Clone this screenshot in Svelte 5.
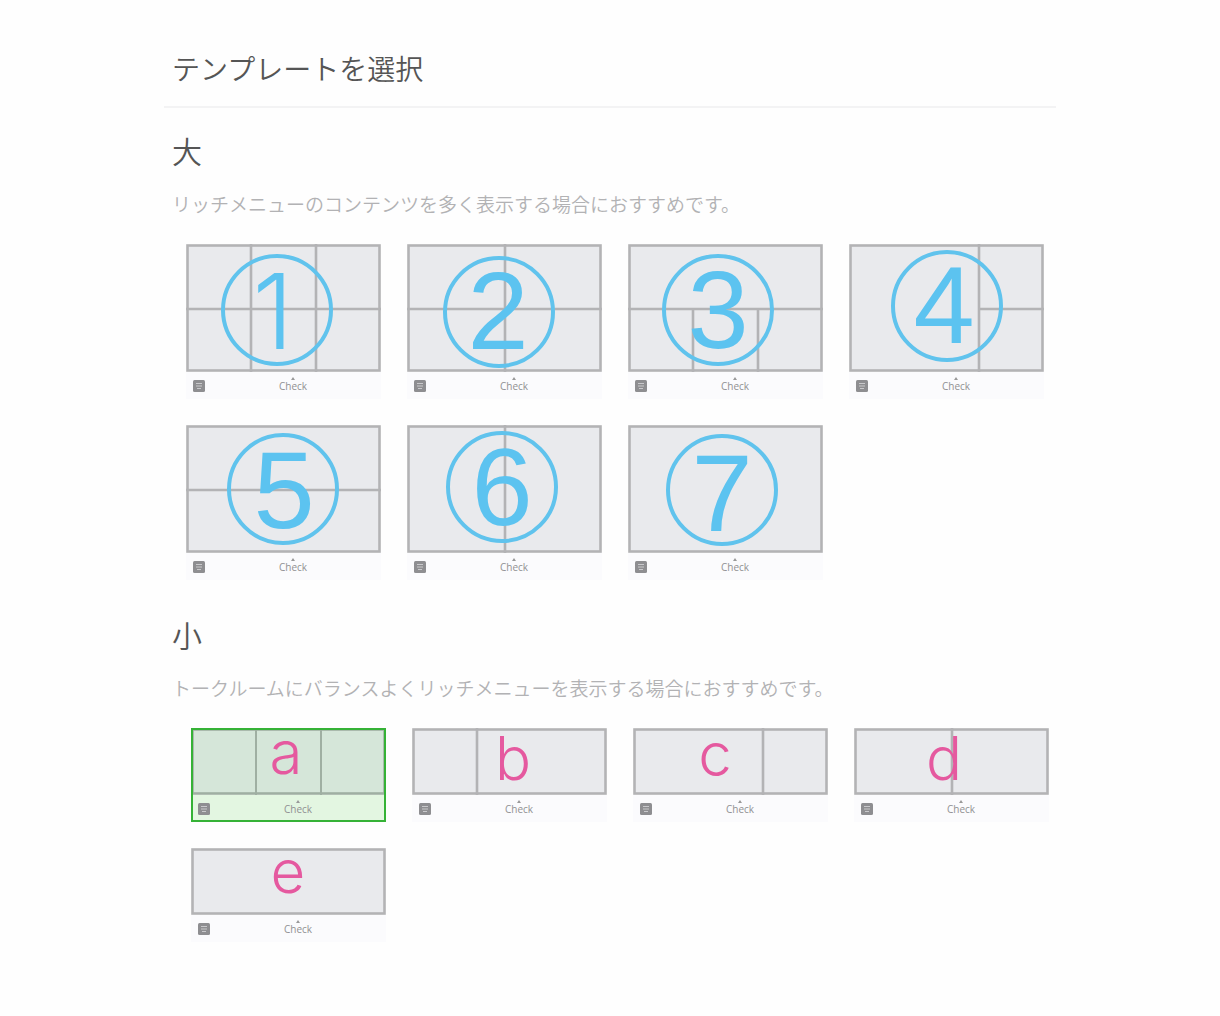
<script lang="ts">
	type Mark = { text: string; x: number; y: number; cx?: number; cy?: number };
	type Template = { id: string; lines: string; mark: Mark };

	const large: Template[] = [
		{ id: '1', lines: 'M65 0V128M130 0V128M0 65H195', mark: { text: '1', x: 87, y: 105, cx: 91, cy: 66 } },
		{ id: '2', lines: 'M98 0V128M0 65H195', mark: { text: '2', x: 91, y: 105, cx: 92, cy: 68 } },
		{ id: '3', lines: 'M0 65H195M65 65V128M130 65V128', mark: { text: '3', x: 90, y: 104, cx: 90, cy: 66 } },
		{ id: '4', lines: 'M130 0V128M130 65H195', mark: { text: '4', x: 95, y: 99, cx: 98, cy: 62 } },
		{ id: '5', lines: 'M0 65H195', mark: { text: '5', x: 98, y: 103, cx: 97, cy: 64 } },
		{ id: '6', lines: 'M98 0V128', mark: { text: '6', x: 95, y: 100, cx: 95, cy: 62 } },
		{ id: '7', lines: '', mark: { text: '7', x: 94, y: 106, cx: 94, cy: 65 } }
	];

	const small: Template[] = [
		{ id: 'a', lines: 'M65 0V67M130 0V67', mark: { text: 'a', x: 95, y: 46 } },
		{ id: 'b', lines: 'M65 0V67', mark: { text: 'b', x: 101, y: 52 } },
		{ id: 'c', lines: 'M130 0V67', mark: { text: 'c', x: 82, y: 48 } },
		{ id: 'd', lines: 'M98 0V67', mark: { text: 'd', x: 90, y: 52 } },
		{ id: 'e', lines: '', mark: { text: 'e', x: 97, y: 45 } }
	];

	let selected = $state('a');
</script>

{#snippet card(item: Template, height: number)}
	<button
		type="button"
		class="card"
		class:selected={selected === item.id}
		aria-pressed={selected === item.id}
		onclick={() => (selected = item.id)}
	>
		<svg class="preview" viewBox="0 0 195 {height}">
			<rect class="frame" x="1.5" y="1.5" width="192" height={height - 3} />
			<path class="line" d={item.lines} />
			{#if item.mark.cx}
				<circle class="ring" cx={item.mark.cx} cy={item.mark.cy} r="54" />
				<text class="number" class:one={item.id === '1'} x={item.mark.x} y={item.mark.y}>{item.mark.text}</text>
			{:else}
				<text class="letter" x={item.mark.x} y={item.mark.y}>{item.mark.text}</text>
			{/if}
		</svg>
		<span class="bar">
			<span class="keyboard">
				<svg width="12" height="12" viewBox="0 0 12 12">
					<rect width="12" height="12" rx="1.5" fill="#8e8e91" />
					<path d="M3 3.5H9M3 6H9M4 8.5H8" stroke="#c9c9cc" stroke-width="1.2" />
				</svg>
			</span>
			<span class="label">
				<svg width="4" height="3" viewBox="0 0 4 3"><path d="M0 3L2 0L4 3Z" fill="#999" /></svg>
				<span>Check</span>
			</span>
		</span>
	</button>
{/snippet}

<main>
	<header>
		<h1>テンプレートを選択</h1>
	</header>

	<section>
		<h2>大</h2>
		<p>リッチメニューのコンテンツを多く表示する場合におすすめです。</p>
		<div class="grid large">
			{#each large as item (item.id)}
				{@render card(item, 128)}
			{/each}
		</div>
	</section>

	<section>
		<h2>小</h2>
		<p>トークルームにバランスよくリッチメニューを表示する場合におすすめです。</p>
		<div class="grid small">
			{#each small as item (item.id)}
				{@render card(item, 67)}
			{/each}
		</div>
	</section>
</main>

<style>
	:global(body) {
		margin: 0;
		background: #fefefe;
	}

	main {
		box-sizing: border-box;
		max-width: 892px;
		margin: 0 auto;
		padding: 50px 0 40px;
		color: #555;
		font-family: 'Noto Sans CJK JP', sans-serif;
	}

	header {
		padding: 0 8px 20px;
		border-bottom: 2px solid #f3f3f4;
	}

	h1,
	h2,
	p {
		margin: 0;
		font-weight: 350;
	}

	h1 {
		font-size: 28px;
		line-height: 36px;
	}

	section {
		padding-top: 24px;
	}

	h2 {
		padding-left: 8px;
		font-size: 30px;
		line-height: 36px;
	}

	p {
		margin: 22px 0 26px;
		padding-left: 8px;
		color: #b2b2b4;
		font-size: 19px;
		line-height: 28px;
	}

	.grid {
		display: grid;
		grid-template-columns: repeat(4, 1fr);
		gap: 26px;
		margin-bottom: 12px;
	}

	.large {
		padding: 0 12px 0 22px;
	}

	.small {
		padding: 0 7px 0 27px;
	}

	.card {
		position: relative;
		display: block;
		padding: 0;
		border: none;
		background: none;
		cursor: pointer;
	}

	.card.selected::after {
		content: '';
		position: absolute;
		inset: 0;
		border: 2px solid #35b236;
	}

	.preview {
		display: block;
		width: 100%;
		overflow: visible;
	}

	.frame {
		fill: #e9eaed;
		stroke: #b3b3b5;
		stroke-width: 2.6;
	}

	.line {
		fill: none;
		stroke: #b3b3b5;
		stroke-width: 2.6;
	}

	.selected .frame {
		fill: #d5e6d9;
		stroke: #9fafa2;
	}

	.selected .line {
		stroke: #9fafa2;
		stroke-width: 2;
	}

	.ring {
		fill: none;
		stroke: #60c3ed;
		stroke-width: 4;
	}

	.number {
		fill: #5cc3f0;
		font-family: 'Liberation Sans', Arial, sans-serif;
		font-size: 110px;
		text-anchor: middle;
	}

	.number.one {
		font-family: Inter, sans-serif;
		font-size: 104px;
		font-weight: 350;
	}

	.letter {
		fill: #e5599f;
		font-family: Inter, sans-serif;
		font-size: 60px;
		font-weight: 350;
		text-anchor: middle;
	}

	.bar {
		display: flex;
		height: 27px;
		background: #fbfbfd;
	}

	.selected .bar {
		background: #e3f6e1;
	}

	.keyboard {
		display: flex;
		align-items: center;
		padding: 0 7px;
	}

	.label {
		display: flex;
		flex: 1;
		flex-direction: column;
		align-items: center;
		padding: 5px 7px 0 0;
		color: #909092;
		font-family: 'Open Sans', sans-serif;
		font-size: 10px;
		line-height: 12px;
	}
</style>
